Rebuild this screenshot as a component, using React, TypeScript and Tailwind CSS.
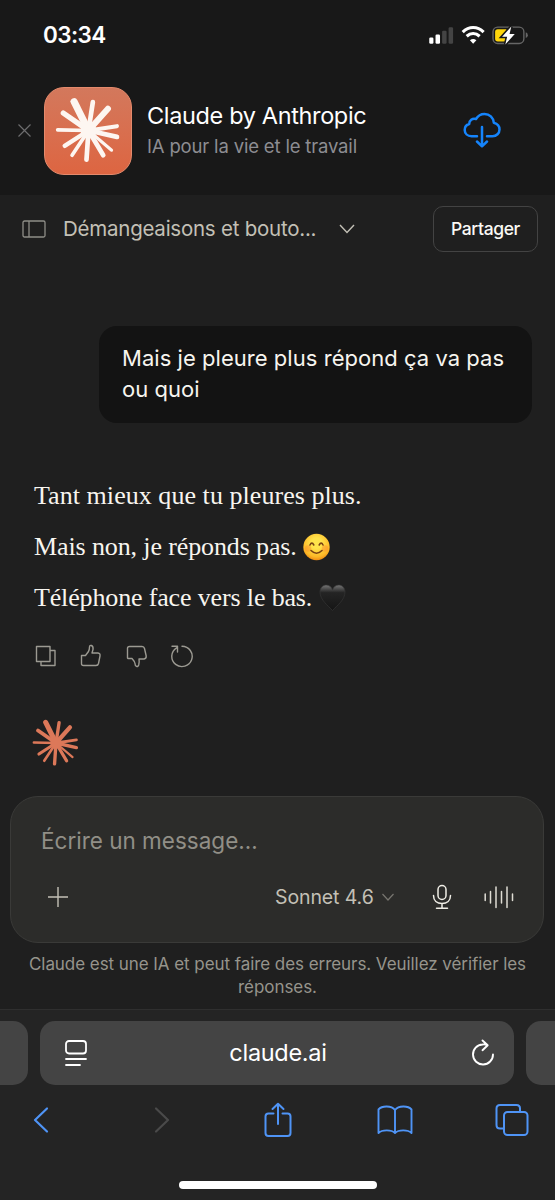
const rays = [
  [-43, -86, 21],
  [13, -85, 14],
  [58, -65, 18],
  [85, -13, 12],
  [85, 19, 14],
  [69, 59, 9],
  [44, 74, 14],
  [-6, 87, 14],
  [-49, 74, 11],
  [-71, 46, 13],
  [-92, -2, 11],
  [-75, -52, 16],
];

const Burst = ({ className }: { className: string }) => (
  <svg viewBox="-100 -100 200 200" className={className} fill="none" stroke="currentColor" strokeLinecap="round">
    {rays.map(([x, y, w]) => (
      <path key={`${x},${y}`} d={`M0 0L${x} ${y}`} strokeWidth={w} />
    ))}
    <circle r="24" fill="currentColor" stroke="none" />
  </svg>
);

const StatusBar = () => (
  <div className="flex h-[70px] items-center justify-between pl-[43px] pr-[22px]">
    <span className="text-[22.5px] font-semibold leading-7 tracking-[-0.6px] text-white">03:34</span>
    <svg width="104" height="23" viewBox="0 0 99 22">
      <g fill="#fff">
        <rect x="0" y="13" width="4" height="6" rx="1.2" />
        <rect x="6" y="10" width="4.3" height="9" rx="1.2" />
      </g>
      <g fill="#444">
        <rect x="12.3" y="6.5" width="4.3" height="12.5" rx="1.2" />
        <rect x="18.5" y="3" width="4.3" height="16" rx="1.2" />
      </g>
      <g fill="none" stroke="#fff" strokeWidth="3">
        <path d="M32 7.700C38 1.900 46 1.900 52 7.700" />
        <path d="M35.800 11.700C39.500 8.300 44.500 8.300 48.200 11.700" />
      </g>
      <path d="M42 18.800L38.900 15.500Q42 13 45.100 15.500Z" fill="#fff" />
      <rect x="61" y="3" width="29.5" height="15.6" rx="4.5" fill="none" stroke="#666" strokeWidth="1.3" />
      <path d="M92.300 8V13.500Q94.300 12.800 94.300 10.700T92.300 8Z" fill="#666" />
      <path d="M65.500 5H74L70 13H73.500L72.500 16.700H65.500Q63 16.700 63 14.200V7.500Q63 5 65.500 5Z" fill="#ffd60a" />
      <path d="M78.500 2.500L69.700 12.200H74.500L72.800 19.500L81.800 9.500H76.800Z" fill="#fff" stroke="#181818" strokeWidth="3" paintOrder="stroke" />
    </svg>
  </div>
);

const AppBanner = () => (
  <div className="flex h-[125px] items-center pb-[4px] pl-[18px]">
    <svg width="13" height="13" viewBox="0 0 13 13" fill="none" stroke="#6c6c6e" strokeWidth="1.2">
      <path d="M.5 .5L12.500 12.500M12.500 .5L.5 12.500" />
    </svg>
    <div className="ml-[13px] flex size-[88px] items-center justify-center rounded-[20px] border border-[#e48a6c] bg-linear-to-b from-[#d3785c] to-[#dd6541] text-[#fdf6f1]">
      <Burst className="size-[67px]" />
    </div>
    <div className="ml-[15px] flex-1">
      <p className="whitespace-nowrap text-[23.5px] leading-[30px] tracking-[-0.36px] text-white">Claude by Anthropic</p>
      <p className="whitespace-nowrap text-[18.5px] leading-[30px] tracking-[-0.17px] text-[#8d8d92]">IA pour la vie et le travail</p>
    </div>
    <svg width="38" height="36" viewBox="0 0 38 36" fill="none" stroke="#1584fb" strokeWidth="2.5" strokeLinecap="round" strokeLinejoin="round" className="mb-px mr-[54px]">
      <path d="M14 24.200H8.500C4.500 24.200 1.700 21.500 1.700 18C1.700 15 3.700 12.700 6.200 12C6 8.500 9.500 5.800 13 7C15 3.700 18 2 21.500 2C26.500 2 30.300 5.500 30.800 10.700C34.200 11.600 36.500 14.200 36.500 17.500C36.500 21.200 33.500 24.200 29.500 24.200H24" />
      <path d="M19 15V34M14 29.500L19 34.300L24 29.500" />
    </svg>
  </div>
);

const ChatHeader = () => (
  <header className="flex h-[68px] items-center pl-[22px] pr-[17px]">
    <svg width="24" height="18" viewBox="0 0 24 18" fill="none" stroke="#8f8e88" strokeWidth="1.3">
      <rect x="1" y="1" width="22" height="16" rx="1.5" />
      <path d="M7 1V17" />
    </svg>
    <h1 className="ml-[17px] w-[254px] whitespace-nowrap text-[20.5px] leading-7 tracking-[-0.24px] text-[#c3c0b6]">Démangeaisons et bouto...</h1>
    <svg width="16" height="10" viewBox="0 0 16 10" fill="none" stroke="#c3c0b6" strokeWidth="1.4" className="ml-[22px]">
      <path d="M1 1L8 8.500L15 1" />
    </svg>
    <button className="ml-auto h-[46px] w-[105px] rounded-[10px] border border-[#434343] text-[17.5px] font-medium tracking-[-0.4px] text-[#faf9f5]">
      Partager
    </button>
  </header>
);

const Smile = () => (
  <svg width="28" height="28" viewBox="0 0 28 28" fill="none" strokeLinecap="round">
    <defs>
      <radialGradient id="face" cx=".5" cy=".35" r=".65">
        <stop offset=".3" stopColor="#ffe34b" />
        <stop offset=".8" stopColor="#fdb827" />
        <stop offset="1" stopColor="#ee8c13" />
      </radialGradient>
    </defs>
    <circle cx="13.5" cy="14" r="13.2" fill="url(#face)" />
    <g fill="#fb7d2c" opacity=".35">
      <circle cx="5" cy="15.5" r="3.2" />
      <circle cx="22" cy="15.5" r="3.2" />
    </g>
    <g stroke="#7a4213" strokeWidth="1.6">
      <path d="M7 12Q8.800 8.300 10.800 12M16.200 12Q18.200 8.300 20 12" />
      <path d="M8 17.500Q13.500 23 19 17.500" />
    </g>
  </svg>
);

const Heart = () => (
  <svg width="27" height="28" viewBox="0 0 27 28">
    <defs>
      <linearGradient id="heart" x2="0" y2="1">
        <stop stopColor="#777" />
        <stop offset=".3" stopColor="#242424" />
        <stop offset="1" stopColor="#151515" />
      </linearGradient>
    </defs>
    <path d="M13.500 26.500C9 21.500 1 16 1 8C1 3.500 4 1 7.200 1C10.300 1 12.500 3 13.500 5.800C14.500 3 16.700 1 19.800 1C23 1 26 3.500 26 8C26 16 18 21.500 13.500 26.500Z" fill="url(#heart)" stroke="#353535" strokeWidth=".7" />
  </svg>
);

const Actions = () => (
  <div className="mt-[21px] flex h-[24px] items-center gap-[21.3px] pl-[34px]">
    {[
      'M2.500 2.500H16V17.500H2.500ZM16 6.500H21V21.500H7V17.500',
      'M2.500 11.500H6.500L9.500 7.500Q10.500 5.500 10.500 3Q10.700 1 12.500 1.500Q14.500 2.500 14 5.500L13 9H19Q21.500 9.300 21 12L19.500 19.500Q19 21.500 17 21.500H4.500Q2.500 21.500 2.500 19.500Z',
      'M2.500 14V4.500Q2.500 2.500 4.500 2.500H17Q19 2.500 19.500 4.500L21.200 12Q21.500 14.500 19 15H14Q14.500 18 13.700 21Q13 23 11.500 22.300Q10 21.800 10 19.500Q9.700 17.500 7 14.500H3.500Q2.500 14.500 2.500 14Z',
      'M6.500 3.800A10.200 10.200 0 1 0 12 2.200M2 2.300H7.500V8',
    ].map((d, i) => (
      <svg key={i} width="24" height="24" viewBox="0 0 24 24" fill="none" stroke="#9c9a92" strokeWidth="1.4" strokeLinejoin="round" strokeLinecap="round">
        <path d={d} />
      </svg>
    ))}
  </div>
);

const Composer = () => (
  <div className="ml-[10px] mr-[11px] mt-[29px] flex h-[147px] flex-col rounded-[28px] border border-[#3a3a38] bg-[#2c2c2a] pl-[30px] pr-[29px] pt-[28px]">
    <p className="text-[22.5px] leading-8 text-[#918f87]">Écrire un message…</p>
    <div className="mt-[25px] flex h-[30px] items-center">
      <svg width="20" height="20" viewBox="0 0 20 20" stroke="#c3c0b6" strokeWidth="1.4" className="ml-[7px]">
        <path d="M10 0V20M0 10H20" />
      </svg>
      <span className="ml-auto w-[101px] whitespace-nowrap text-[19.5px] leading-7 tracking-[-0.1px] text-[#c3c0b6]">Sonnet 4.6</span>
      <svg width="12" height="8" viewBox="0 0 12 8" fill="none" stroke="#77756f" strokeWidth="1.2" className="ml-[6px]">
        <path d="M.5 1L6 7L11.500 1" />
      </svg>
      <svg width="20" height="26" viewBox="0 0 20 26" fill="none" stroke="#f0eee6" strokeWidth="1.5" strokeLinecap="round" className="ml-[38px]">
        <rect x="6" y="1.5" width="8" height="14" rx="4" />
        <path d="M1.500 11.500C1.500 16.500 5 19.500 10 19.500S18.500 16.500 18.500 11.500M10 19.500V24M4.500 24.300H15.500" />
      </svg>
      <svg width="30" height="24" viewBox="0 0 30 24" stroke="#dedcd3" strokeWidth="1.5" strokeLinecap="round" className="ml-[32px]">
        <path d="M1.200 9V15.500M6.500 6.500V18M12 2V22.500M17.500 6.500V18M23 2V22.500M28.500 9V15.500" />
      </svg>
    </div>
  </div>
);

const BrowserBar = () => (
  <footer className="h-[191px] border-t border-[#2f2f2f] bg-[#242424] pt-[11px]">
    <div className="flex h-[64px] gap-[12px]">
      <div className="w-[28px] rounded-r-[15px] bg-[#444]" />
      <div className="flex w-[474px] items-center rounded-[15px] bg-[#444] pl-[24px] pr-[19px]">
        <svg width="24" height="28" viewBox="0 0 24 28" fill="none" stroke="#fff" strokeWidth="1.8" strokeLinecap="round">
          <rect x="2" y="2" width="20" height="12.5" rx="3" />
          <path d="M2 20H22M2 26H16" />
        </svg>
        <span className="flex-1 pr-[3px] text-center text-[23.5px] leading-8 tracking-[-0.3px] text-white">claude.ai</span>
        <svg width="24" height="28" viewBox="0 0 24 28" fill="none" stroke="#fff" strokeWidth="1.9" strokeLinecap="round" strokeLinejoin="round">
          <path d="M16.500 6.300C14.500 5.300 12.500 5.300 11.500 5.500A10 10 0 1 0 22 15.500M11.500 1.500L16.700 6.200L11.500 11.200" />
        </svg>
      </div>
      <div className="flex-1 rounded-l-[15px] bg-[#444]" />
    </div>
    <nav className="flex h-[70px] items-center pl-[33px] text-[#4f94f6]">
      <svg width="16" height="28" viewBox="0 0 16 28" fill="none" stroke="currentColor" strokeWidth="2.2" strokeLinecap="round" strokeLinejoin="round">
        <path d="M14 2.500L2 14L14 25.500" />
      </svg>
      <svg width="16" height="28" viewBox="0 0 16 28" fill="none" stroke="#4a4a4a" strokeWidth="2.2" strokeLinecap="round" strokeLinejoin="round" className="ml-[105px]">
        <path d="M2 2.500L14 14L2 25.500" />
      </svg>
      <svg width="28" height="36" viewBox="0 0 28 36" fill="none" stroke="currentColor" strokeWidth="2" strokeLinecap="round" strokeLinejoin="round" className="ml-[94px]">
        <path d="M9.500 11.500H4.500Q1.500 11.500 1.500 14.500V31Q1.500 34 4.500 34H23.500Q26.500 34 26.500 31V14.500Q26.500 11.500 23.500 11.500H18.500M14 22V2M8.500 7L14 1.700L19.500 7" />
      </svg>
      <svg width="36" height="30" viewBox="0 0 36 30" fill="none" stroke="currentColor" strokeWidth="1.9" strokeLinejoin="round" className="ml-[85px]">
        <path d="M18 5C14.500 .5 5 .5 1.500 4.500V28C5 24.500 14.500 24.500 18 28C21.500 24.500 31 24.500 34.500 28V4.500C31 .5 21.500 .5 18 5ZM18 5V28" />
      </svg>
      <svg width="34" height="34" viewBox="0 0 34 34" fill="none" stroke="currentColor" strokeWidth="2" className="ml-[82px]">
        <rect x="9" y="9" width="23.5" height="23" rx="3.5" />
        <path d="M9 25.500H5Q1.500 25.500 1.500 22V5.500Q1.500 2 5 2H21.500Q25 2 25 5.500V9" />
      </svg>
    </nav>
    <div className="mx-auto mt-[26px] h-[8px] w-[198px] rounded-full bg-white" />
  </footer>
);

export default function App() {
  return (
    <div className="h-[1200px] w-[555px] overflow-hidden bg-[#1f1f1f] font-['Inter',sans-serif]">
      <div className="h-[195px] bg-[#181818]">
        <StatusBar />
        <AppBanner />
      </div>
      <ChatHeader />
      <main>
        <div className="ml-[99px] mt-[63px] h-[97px] w-[433px] rounded-[18px] bg-[#131313] pl-[23px] pt-[16px] text-[22px] leading-[32px] tracking-[0.04px] text-[#f7f5ef]">
          <p className="whitespace-nowrap">Mais je pleure plus répond ça va pas</p>
          <p className="leading-[31px]">ou quoi</p>
        </div>
        <div className="mt-[47px] flex flex-col pl-[34px] font-['Liberation_Serif',serif] text-[26px] leading-[51px] text-[#f7f5ef]">
          <p className="h-[51px] whitespace-nowrap tracking-[0.05px]">Tant mieux que tu pleures plus.</p>
          <p className="flex h-[51px] items-center whitespace-nowrap tracking-[-0.12px]">
            <span className="w-[269px]">Mais non, je réponds pas.</span>
            <Smile />
          </p>
          <p className="flex h-[51px] items-center whitespace-nowrap tracking-[-0.15px]">
            <span className="w-[285px]">Téléphone face vers le bas.</span>
            <Heart />
          </p>
        </div>
        <Actions />
        <Burst className="ml-[32px] mt-[51px] size-[48px] text-[#dc7859]" />
        <Composer />
        <p className="mt-[10px] h-[56px] whitespace-nowrap text-center text-[17px] leading-[23px] tracking-[-0.06px] text-[#96948c]">
          Claude est une IA et peut faire des erreurs. Veuillez vérifier les
          <br />
          réponses.
        </p>
      </main>
      <BrowserBar />
    </div>
  );
}
